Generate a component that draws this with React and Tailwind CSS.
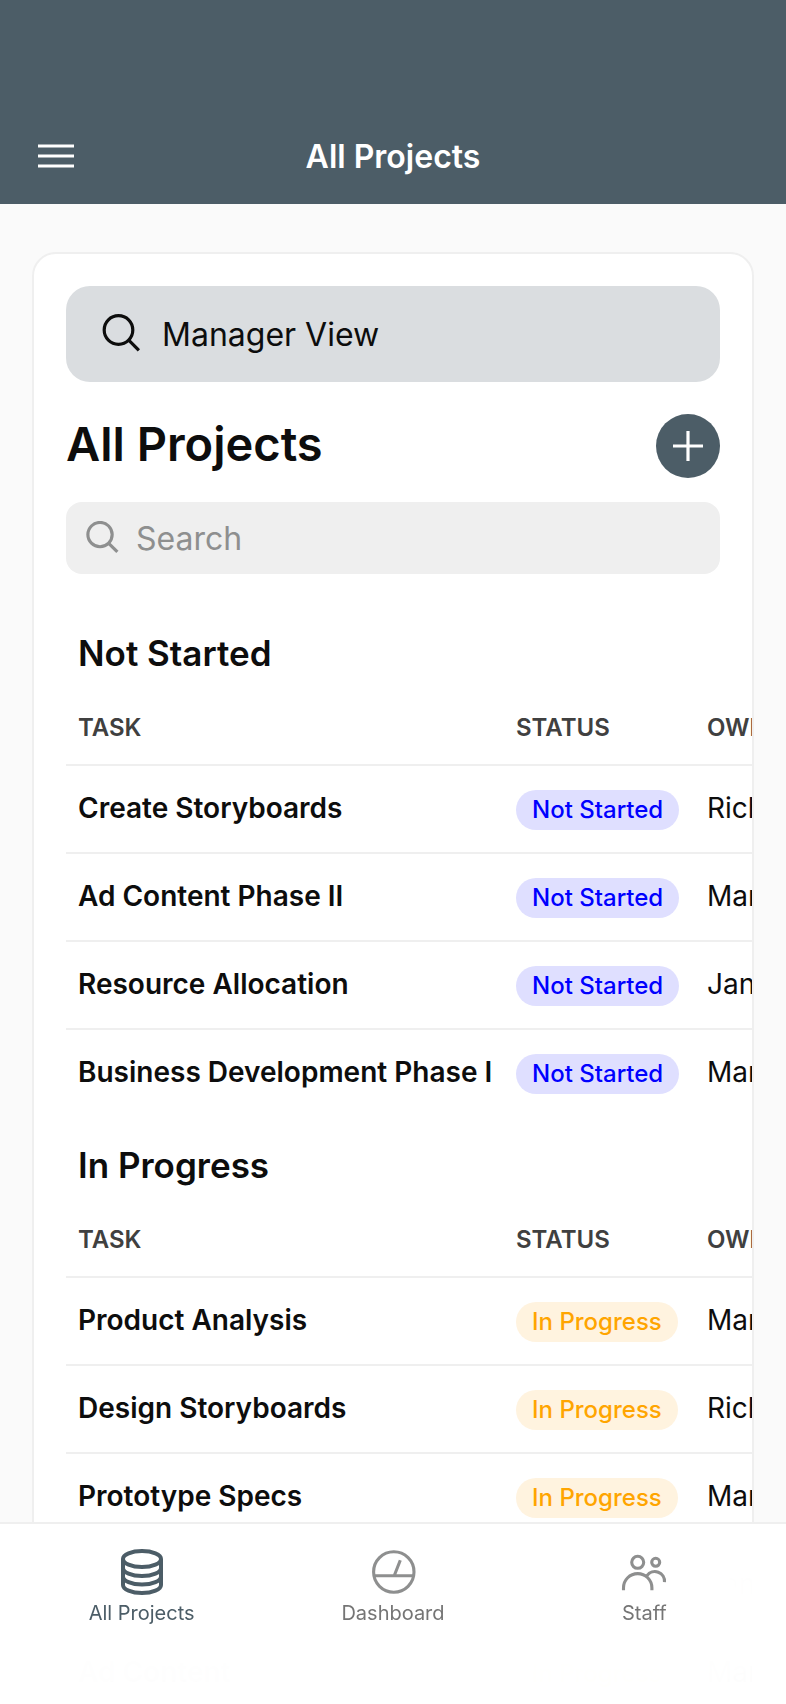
import React from "react";

const SECTIONS = [
  {
    title: "Not Started",
    pill: "bg-[#dfdfff] text-[#0000ff]",
    rows: [
      ["Create Storyboards", "Richard"],
      ["Ad Content Phase II", "Maria"],
      ["Resource Allocation", "Janet"],
      ["Business Development Phase I", "Maria"],
    ],
  },
  {
    title: "In Progress",
    pill: "bg-[#fff3df] text-[#ffa500]",
    rows: [
      ["Product Analysis", "Maria"],
      ["Design Storyboards", "Richard"],
      ["Prototype Specs", "Maria"],
      ["Market Research", "Janet"],
      ["Ad Content", "Maria"],
    ],
  },
];

function SearchIcon({ className, strokeWidth }) {
  return (
    <svg viewBox="0 0 40 40" className={className} fill="none" stroke="currentColor" strokeWidth={strokeWidth} aria-hidden="true">
      <circle cx="16.5" cy="16" r="14.3" />
      <path d="M26.7 26.2 36.9 36.4" />
    </svg>
  );
}

function DatabaseIcon() {
  return (
    <svg viewBox="0 0 48 48" className="size-12" fill="none" stroke="currentColor" strokeWidth="4" aria-hidden="true">
      <ellipse cx="24" cy="11" rx="19" ry="8" />
      <path d="M5 11v26c0 4.4 8.5 8 19 8s19-3.600 19-8V11" />
      <path d="M5 20c0 4.400 8.500 8 19 8s19-3.600 19-8" />
      <path d="M5 28.500c0 4.400 8.500 8 19 8s19-3.600 19-8" />
    </svg>
  );
}

function GaugeIcon() {
  return (
    <svg viewBox="0 0 48 48" className="size-12" fill="none" stroke="currentColor" strokeWidth="3.1" aria-hidden="true">
      <circle cx="24.8" cy="24" r="20.2" />
      <path d="M5 27.700h39.600M25.300 27.500 31.300 12.300" />
    </svg>
  );
}

function PeopleIcon() {
  return (
    <svg viewBox="0 0 48 48" className="size-12" fill="none" stroke="currentColor" strokeWidth="3.1" aria-hidden="true">
      <circle cx="17.7" cy="14.3" r="6" />
      <circle cx="35.7" cy="14.3" r="4" />
      <path d="M3.500 42.200v-2.400a14.200 14.200 0 0 1 28.400 0v2.400M27 27.600A9.700 9.700 0 0 1 44.500 34.200" />
    </svg>
  );
}

const TABS = [
  { label: "All Projects", Icon: DatabaseIcon, color: "text-[#4c5d67]" },
  { label: "Dashboard", Icon: GaugeIcon, color: "text-[#757575]", icon: "text-[#8e8f8f]" },
  { label: "Staff", Icon: PeopleIcon, color: "text-[#757575]", icon: "text-[#8e8f8f]" },
];

function TaskSection({ title, pill, rows }) {
  return (
    <section>
      <h2 className="px-3 text-[35px] leading-[38px] font-semibold">{title}</h2>
      <div className="-mr-8 mt-[18px] overflow-x-auto [scrollbar-width:none]">
        <table className="w-[900px] table-fixed border-separate border-spacing-0 text-left">
          <thead>
            <tr className="h-[76px] text-2xl text-[#404040] uppercase">
              <th className="w-[438px] border-b-2 border-[#efefef] px-3 pt-0.5 font-semibold">Task</th>
              <th className="w-[191px] border-b-2 border-[#efefef] px-3 pt-0.5 font-semibold">Status</th>
              <th className="border-b-2 border-[#efefef] px-3 pt-0.5 font-semibold">Owner</th>
            </tr>
          </thead>
          <tbody>
            {rows.map(([task, owner], i) => (
              <tr key={i} className="group h-[88px] text-[28px] leading-8">
                <td className="border-b-2 border-[#efefef] px-3 pb-0.5 font-semibold whitespace-nowrap group-last:border-transparent">{task}</td>
                <td className="border-b-2 border-[#efefef] px-3 group-last:border-transparent">
                  <span className={`mt-0.5 flex h-10 w-fit items-center rounded-full px-4 text-2xl font-medium whitespace-nowrap ${pill}`}>
                    {title}
                  </span>
                </td>
                <td className="border-b-2 border-[#efefef] px-3 pb-0.5 group-last:border-transparent">{owner}</td>
              </tr>
            ))}
          </tbody>
        </table>
      </div>
    </section>
  );
}

export default function App() {
  return (
    <div className="relative flex h-screen flex-col overflow-hidden bg-[#fafafa] font-['Inter',sans-serif] text-[#0d0d0d]">
      <header className="grid shrink-0 grid-cols-[1fr_auto_1fr] items-center bg-[#4c5d67] px-8 pt-[108px] text-white">
        <button type="button" aria-label="Open menu" className="flex size-12 items-center justify-center">
          <svg viewBox="0 0 36 24" className="h-6 w-9" fill="none" stroke="currentColor" strokeWidth="3.2" aria-hidden="true">
            <path d="M0 2h36M0 12h36M0 22h36" />
          </svg>
        </button>
        <h1 className="pt-[29px] pb-[27px] text-[32px] leading-10 font-semibold">All Projects</h1>
      </header>

      <main className="grow overflow-y-auto px-8 pt-12 [scrollbar-width:none]">
        <div className="overflow-hidden rounded-3xl border-2 border-[#efefef] bg-white p-8">
          <button type="button" className="flex h-24 w-full items-center gap-5 rounded-3xl bg-[#dadde0] px-9 text-[32px]">
            <SearchIcon className="size-10" strokeWidth="3.2" />
            <span className="pt-0.5">Manager View</span>
          </button>

          <div className="mt-8 flex items-center justify-between">
            <h2 className="pb-1 text-[47px] leading-12 font-semibold">All Projects</h2>
            <button type="button" aria-label="Add project" className="flex size-16 items-center justify-center rounded-full bg-[#4c5d67] text-white">
              <svg viewBox="0 0 30 30" className="size-[30px]" fill="none" stroke="currentColor" strokeWidth="3.2" aria-hidden="true">
                <path d="M15 0v30M0 15h30" />
              </svg>
            </button>
          </div>

          <label className="mt-6 flex h-18 items-center gap-4 rounded-2xl bg-[#efefef] px-5 text-[#8e8f8f]">
            <SearchIcon className="size-[34px] shrink-0" strokeWidth="3.7" />
            <input
              type="search"
              placeholder="Search"
              aria-label="Search projects"
              className="h-full min-w-0 grow bg-transparent text-[32px] outline-none placeholder:text-[#8e8f8f]"
            />
          </label>

          <div className="mt-[60px] flex flex-col gap-7">
            {SECTIONS.map((section) => (
              <TaskSection key={section.title} {...section} />
            ))}
          </div>
        </div>
      </main>

      <nav className="absolute inset-x-0 bottom-0 grid h-[182px] grid-cols-3 items-start border-t-2 border-[#efefef] bg-white/98 px-4 backdrop-blur-2xl">
        {TABS.map(({ label, Icon, color, icon }) => (
          <a key={label} href="#" className={`flex flex-col items-center gap-1 pt-6 text-xl leading-[26px] ${color}`}>
            <span className={icon}>
              <Icon />
            </span>
            {label}
          </a>
        ))}
      </nav>
    </div>
  );
}
